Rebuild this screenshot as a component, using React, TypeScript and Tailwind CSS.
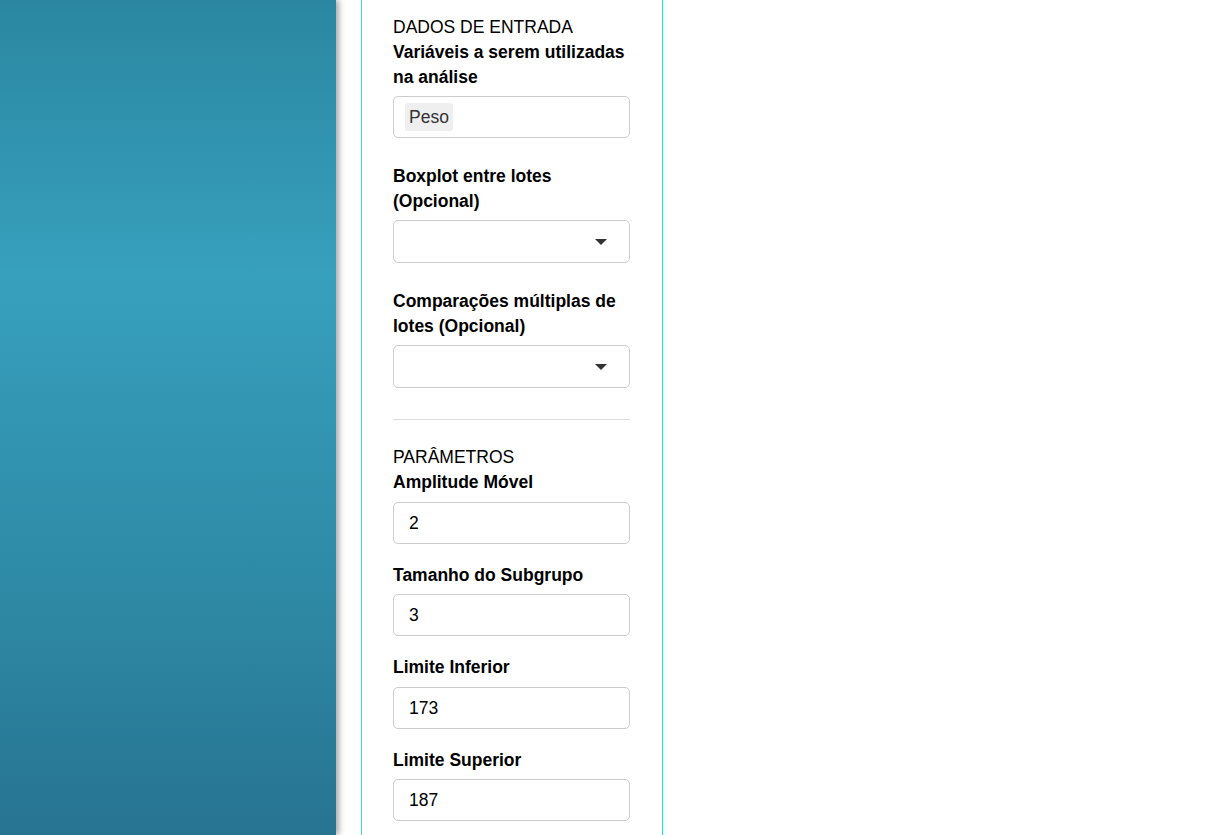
import { ReactNode } from 'react';

function Label({ children, className = '' }: { children: ReactNode; className?: string }) {
  return <div className={`font-bold text-[17.5px] leading-[25px] text-black ${className}`}>{children}</div>;
}

function TextInput({ value }: { value: string }) {
  return (
    <div className="h-[42px] w-full rounded-[5px] border border-[#cccccc] bg-white flex items-center pl-[15px] text-[17.5px] text-black">
      {value}
    </div>
  );
}

function SelectBox() {
  return (
    <div className="h-[43px] w-full rounded-[5px] border border-[#cccccc] bg-white flex items-center justify-end pr-[22px]">
      <div className="w-0 h-0 border-l-[6px] border-r-[6px] border-t-[6px] border-l-transparent border-r-transparent border-t-[#333333]" />
    </div>
  );
}

export default function App() {
  return (
    <div className="flex h-[835px] w-full overflow-hidden bg-white font-['Liberation_Sans',Arial,sans-serif]">
      {/* Sidebar */}
      <div className="relative z-10 w-[336px] shrink-0 h-full bg-[linear-gradient(to_bottom,#2b87a1_0%,#37a0bd_33%,#2e8aa6_70%,#277491_100%)] shadow-[3px_0_6px_rgba(0,0,0,0.35)]" />

      <div className="w-[25px] shrink-0" />

      {/* Panel */}
      <div className="w-[302px] shrink-0 h-full border-l border-l-[#3fe0c8] border-r border-r-[#00f2e6] pl-[31px] pr-[32px] pt-[15px]">
        <div className="text-[17.5px] leading-[25px] text-black">DADOS DE ENTRADA</div>
        <Label>Variáveis a serem utilizadas na análise</Label>
        <div className="mt-[6px] h-[42px] w-full rounded-[5px] border border-[#cccccc] bg-white flex items-center pl-[11px]">
          <span className="bg-[#efefef] rounded-[3px] px-[4px] h-[28px] flex items-center text-[17.5px] text-[#333333]">Peso</span>
        </div>

        <Label className="mt-[26px]">Boxplot entre lotes (Opcional)</Label>
        <div className="mt-[6px]">
          <SelectBox />
        </div>

        <Label className="mt-[26px]">Comparações múltiplas de lotes (Opcional)</Label>
        <div className="mt-[6px]">
          <SelectBox />
        </div>

        <div className="mt-[31px] border-t border-[#dddddd]" />

        <div className="mt-[25px] text-[17.5px] leading-[25px] text-black">PARÂMETROS</div>
        <Label>Amplitude Móvel</Label>
        <div className="mt-[7px]">
          <TextInput value="2" />
        </div>

        <Label className="mt-[19px]">Tamanho do Subgrupo</Label>
        <div className="mt-[6px]">
          <TextInput value="3" />
        </div>

        <Label className="mt-[19px]">Limite Inferior</Label>
        <div className="mt-[7px]">
          <TextInput value="173" />
        </div>

        <Label className="mt-[19px]">Limite Superior</Label>
        <div className="mt-[6px]">
          <TextInput value="187" />
        </div>
      </div>
    </div>
  );
}
